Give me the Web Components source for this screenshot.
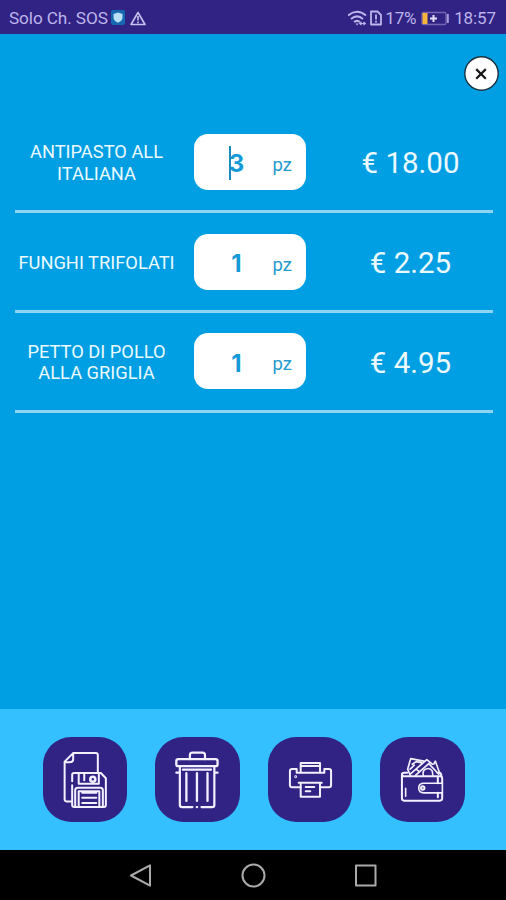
<!DOCTYPE html>
<html lang="it">
<head>
<meta charset="utf-8">
<title>Ordine</title>
<style>
html,body{margin:0;height:100%;overflow:hidden}
body{font-family:Roboto,"Liberation Sans",sans-serif;background:#000}
</style>
</head>
<body>
<order-app></order-app>
<script>
const define = (name, html, setup) => customElements.define(name, class extends HTMLElement {
  connectedCallback() {
    if (this.shadowRoot) return;
    const t = document.createElement('template');
    t.innerHTML = html;
    const root = this.attachShadow({mode: 'open'});
    root.append(t.content.cloneNode(true));
    if (setup) setup(this, root);
  }
});

define('status-bar', `<style>
:host{display:flex;height:34px;box-sizing:border-box;padding:2px 10px 0 9px;align-items:center;background:#312383;color:#bdb5ec;font-size:17.2px;line-height:32px;white-space:nowrap}
svg{display:block;flex:none}
.name{letter-spacing:-.1px}
.shield{margin-left:3px}.warn{margin-left:5px}
.right{margin-left:auto;display:flex;align-items:center}
.pct{margin:0 5px 0 1px;font-size:17px;letter-spacing:-.25px}.time{margin-left:4px;font-size:17px;letter-spacing:-.1px}
</style>
<span class="name">Solo Ch. SOS</span>
<svg class="shield" width="14" height="16" viewBox="0 0 14 16"><rect width="14" height="15" rx="2" fill="#1767b0"/><path d="M7 2.500l4.500 1.600v3.400c0 2.500-2 4.200-4.500 5.300-2.500-1.100-4.500-2.800-4.500-5.300V4.100z" fill="#b9def5"/></svg>
<svg class="warn" width="16" height="15" viewBox="0 0 16 15" fill="none" stroke="#c8c1ef" stroke-width="1.600"><path d="M8 1.500L15 13.500H1z" stroke-linejoin="round"/><path d="M8 5v4.500M8 10.600v1.700"/></svg>
<div class="right">
<svg width="22" height="17" viewBox="0 0 22 17" fill="none" stroke="#bdb5ec" stroke-width="2"><path d="M0 5.500Q9 -2 18 5.500M3 8.900Q9 3.900 15 8.900M6 12.100q3-2.500 6 0"/><path d="M7.500 13.500L9 15.500l1.500-2z" fill="#bdb5ec" stroke="none"/><path d="M12 13.500h5M13.500 12l-1.800 1.500 1.800 1.500M15.500 12l1.800 1.500-1.800 1.500" stroke-width="1.200"/></svg>
<svg width="14" height="16" viewBox="0 0 14 16" fill="none" stroke="#bdb5ec" stroke-width="1.800"><path d="M1 1.500h6.500L11 5v9.500H1z" stroke-linejoin="round"/><path d="M6 4.500v5M6 10.700v1.800" stroke-width="1.800"/></svg>
<span class="pct">17%</span>
<svg width="29" height="15" viewBox="0 0 29 15"><rect x="1" y="1.500" width="24" height="12" rx="1.500" fill="none" stroke="#7565b2" stroke-width="1.300"/><rect x="1.500" y="2" width="5" height="11" fill="#f5b43c"/><path d="M12.500 4v7M9 7.500h7" stroke="#e5e0f8" stroke-width="2"/><path d="M26.800 3v9" stroke="#a89ede" stroke-width="2"/></svg>
<span class="time">18:57</span></div>`);

define('close-button', `<style>
:host{display:block;width:35px;height:35px}
button{all:unset;display:block;height:35px}svg{display:block}
</style><button aria-label="Chiudi"><svg width="35" height="35" viewBox="0 0 35 35"><circle cx="17.500" cy="17.500" r="16.700" fill="#fff" stroke="#17323f" stroke-width="1.400"/><path d="M12.200 13.100l9.600 9.600M21.800 13.100l-9.600 9.600" stroke="#171717" stroke-width="2.200"/></svg></button>`);

define('quantity-field', `<style>
:host{display:grid;grid-template-columns:86px 1fr;width:112.500px;height:56px;border-radius:14px;background:#fff;color:#149bd7;align-items:center;box-sizing:border-box}
.n{display:flex;justify-content:center;position:relative;font:700 24px/56px Inter,sans-serif;padding-top:2px}
.unit{font-size:18.500px;line-height:56px;margin-left:-7px;padding-top:3px;color:#279bcd}
.caret{display:none;position:absolute;left:35px;top:12px;width:2.500px;height:34px;background:#168cbd}
:host([active]) .caret{display:block}
</style><span class="n"><slot></slot><i class="caret"></i></span><span class="unit">pz</span>`);

define('order-row', `<style>
:host{display:grid;grid-template-columns:164px 1fr 164px;align-items:center;height:99.700px;box-sizing:border-box;border-bottom:3px solid #8ed5f4;color:#ecfaff}
.name{text-align:center;font-size:18.300px;line-height:21.500px;white-space:pre-line;padding-top:2px}
quantity-field{margin-left:15px}
.price{text-align:center;font-size:29.500px;line-height:36px;white-space:nowrap;padding-top:3px}
</style><div class="name"><slot></slot></div><quantity-field></quantity-field><div class="price"></div>`, (host, root) => {
  const q = root.querySelector('quantity-field');
  q.textContent = host.getAttribute('qty');
  q.toggleAttribute('active', host.hasAttribute('active'));
  root.querySelector('.price').textContent = '€ ' + host.getAttribute('price');
});

define('action-button', `<style>
:host{display:block;width:84.500px;height:84.500px}
button{all:unset;display:block;width:100%;height:100%;border-radius:28px;background:#312383}
::slotted(svg){display:block;width:84.500px;height:84.500px;fill:none;stroke:#f3efff;stroke-width:2;stroke-linecap:round;stroke-linejoin:round}
</style><button><slot></slot></button>`);

define('action-bar', `<style>
:host{display:flex;height:141px;box-sizing:border-box;padding:28px 0 0 42.500px;gap:28px;background:#34bfff}
</style>
<action-button aria-label="Salva"><svg viewBox="0 0 84 84">
<path d="M54.500 35V18Q54.500 16 52.500 16H30L21.500 24.500V62Q21.500 64 23.500 64H28M30 16V22Q30 25 26.500 25H22"/>
<path d="M29 44V37.500Q29 35.800 31 35.800H57.500L62.500 41V67.500Q62.500 69.500 60.500 69.500H31Q29 69.500 29 67.500V48"/>
<path d="M35.500 36V46.500H55.500V36M41 36V43M32 69V53Q32 50.500 34.500 50.500H57Q59.500 50.500 59.500 53V69M35.500 69V54H56V69M39 55.500H53M39 60.500H53M39 65.500H53"/><circle cx="49.500" cy="42" r="2.500" stroke-width="2.600"/></svg></action-button>
<action-button aria-label="Elimina"><svg viewBox="0.8 0 84 84">
<rect x="22" y="22" width="41" height="7" rx="2" stroke-width="2.300"/><path d="M35.500 22V18Q35.500 15.500 38 15.500H48Q50.500 15.500 50.500 18V22M25.500 29V67.500Q25.500 69.700 28 69.700H38M47 69.700H57.500Q59.800 69.700 59.800 67.500V29M42.300 69.700h.4M22 35.500H25M60 35.500H63M28.500 32.500H56.500" stroke-width="2.200"/><path d="M32 36V63.500M42.500 36V63.500M53 36V63.500" stroke-width="2.300"/></svg></action-button>
<action-button aria-label="Stampa"><svg viewBox="0 0 84 84">
<path d="M32.500 50H24Q21.800 50 21.800 48V34Q21.800 31.800 24 31.800H28.500V35.500H56V31.800H60.500Q62.700 31.800 62.700 34V48Q62.700 50 60.500 50H52"/><path d="M32.500 35V25.800H51.700V35M32.500 47V59.300H51.700V47M30.500 45.500H53.500M34 28.800H50M37.500 49.700H46M37.500 54H42"/><circle cx="27.500" cy="39.500" r=".4"/></svg></action-button>
<action-button aria-label="Paga"><svg viewBox="0 0 84 84">
<path d="M61.800 46V41Q61.800 39 59.800 39H24Q21.800 39 21.800 37.300Q21.800 35.500 24 35.500H27M21.800 37.300V61Q21.800 63.300 24 63.300H59.500Q61.800 63.300 61.800 61V55.500M57 35.500H59Q61 35.500 61 39M57.500 39V46M57.500 55.500V60"/>
<path d="M62 46H43.500Q38.500 46 38.500 50.700Q38.500 55.500 43.500 55.500H62V46M25.500 51V59" stroke-width="1.600"/><circle cx="42.500" cy="50.700" r="1.700"/>
<path d="M30 38L27.500 32L30.500 21.500L43.500 24M30 37L46.500 22.500L52 27M32 27L36 24.500L41 25.500M30 32L34 28M35.500 38L48.500 26.500L58.500 37" stroke-width="1.700"/><path d="M43 38Q42 32.500 46.500 31.500Q50 30.500 52 34L52.500 38M36.500 32.500L39 34.500M53.500 27L55 24L59 35" stroke-width="1.600"/></svg></action-button>`);

define('nav-bar', `<style>
:host{display:flex;height:50px;background:#000;justify-content:center;gap:87.500px;align-items:center;box-sizing:border-box}
svg{display:block;width:25px;height:25px;fill:none;stroke:#aaa;stroke-width:2;stroke-linejoin:round}
</style>
<svg viewBox="0 0 25 25"><path d="M22 2.300V22.700L3 12.500z"/></svg>
<svg viewBox="0 0 25 25"><circle cx="12.500" cy="12.500" r="11"/></svg>
<svg viewBox="0 0 25 25"><rect x="3" y="2.500" width="19.500" height="20"/></svg>`);

define('order-app', `<style>
:host{display:flex;flex-direction:column;width:506px;height:900px;overflow:hidden}
main{flex:1;background:#009fe3;display:flex;flex-direction:column}
header{display:flex;justify-content:flex-end;height:79.500px;box-sizing:border-box;padding:22px 7px 0 0}
section{padding:0 13.500px 0 14.500px}
</style>
<status-bar></status-bar>
<main><header><close-button></close-button></header>
<section>
<order-row qty="3" price="18.00" active>ANTIPASTO ALL
ITALIANA</order-row>
<order-row qty="1" price="2.25">FUNGHI TRIFOLATI</order-row>
<order-row qty="1" price="4.95">PETTO DI POLLO
ALLA GRIGLIA</order-row>
</section></main>
<action-bar></action-bar>
<nav-bar></nav-bar>`);
</script>
</body>
</html>
